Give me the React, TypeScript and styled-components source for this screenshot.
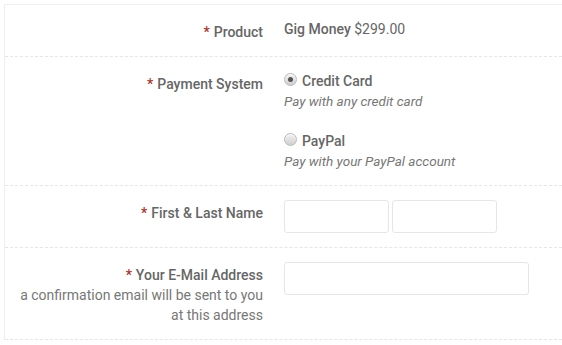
import React from "react";
import styled, { createGlobalStyle } from "styled-components";

const GlobalStyle = createGlobalStyle`
  html, body {
    margin: 0;
    padding: 0;
    background: #fff;
    overflow: hidden;
  }
  body {
    font-family: Roboto, "Liberation Sans", sans-serif;
    font-size: 14px;
    line-height: 20px;
    color: #666;
  }
`;

const Form = styled.div`
  margin: 4px 0 0 4px;
  border-top: 1px solid #f0f0f0;
  border-left: 1px solid #eeeeee;
`;

const Row = styled.div`
  display: flex;
  align-items: flex-start;
  padding: 14px 0;
  border-bottom: 1px dashed #e6e6e6;
`;

const Label = styled.div`
  flex: 0 0 258px;
  padding-top: 3px;
  text-align: right;
`;

const LabelTitle = styled.div`
  font-weight: 500;
  color: #666;
`;

const LabelHint = styled.div`
  color: #777;
`;

const Star = styled.span`
  color: #a8332e;
  margin-right: 4px;
`;

const Value = styled.div`
  margin-left: 21px;
  display: flex;
  flex-direction: column;
`;

const Product = styled.div`
  color: #666;
`;

const Strong = styled.span`
  font-weight: 500;
`;

const Option = styled.label<{ $gap?: boolean }>`
  display: flex;
  flex-direction: column;
  margin-top: ${(p) => (p.$gap ? "20px" : "0")};
`;

const OptionHead = styled.div`
  display: flex;
  align-items: center;
  font-weight: 500;
  color: #666;
`;

const Radio = styled.span<{ $checked?: boolean }>`
  position: relative;
  width: 11px;
  height: 11px;
  border-radius: 50%;
  margin: 0 5px 3px 0;
  border: 1px solid #b9b9b9;
  background: linear-gradient(#f2f2f2, #cfcfcf);
  box-shadow: inset 0 1px 1px rgba(255, 255, 255, 0.8);

  &::after {
    content: "";
    display: ${(p) => (p.$checked ? "block" : "none")};
    position: absolute;
    left: 3px;
    top: 3px;
    width: 5px;
    height: 5px;
    border-radius: 50%;
    background: #555;
  }
`;

const OptionDesc = styled.div`
  font-style: italic;
  color: #777;
  font-size: 13.5px;
`;

const Inputs = styled.div`
  display: flex;
  gap: 3px;
`;

const Input = styled.input<{ $w: number }>`
  box-sizing: border-box;
  width: ${(p) => p.$w}px;
  height: 33px;
  border: 1px solid #e6e6e6;
  border-radius: 3px;
  background: #fff;
  outline: none;
  margin: 0;
  padding: 0 8px;
  font-family: inherit;
`;

export default function App() {
  return (
    <>
      <GlobalStyle />
      <Form>
        <Row>
          <Label>
            <LabelTitle>
              <Star>*</Star>Product
            </LabelTitle>
          </Label>
          <Value>
            <Product>
              <Strong>Gig Money</Strong> $299.00
            </Product>
          </Value>
        </Row>
        <Row>
          <Label>
            <LabelTitle>
              <Star>*</Star>Payment System
            </LabelTitle>
          </Label>
          <Value>
            <Option>
              <OptionHead>
                <Radio $checked />
                Credit Card
              </OptionHead>
              <OptionDesc>Pay with any credit card</OptionDesc>
            </Option>
            <Option $gap>
              <OptionHead>
                <Radio />
                PayPal
              </OptionHead>
              <OptionDesc>Pay with your PayPal account</OptionDesc>
            </Option>
          </Value>
        </Row>
        <Row>
          <Label>
            <LabelTitle>
              <Star>*</Star>First &amp; Last Name
            </LabelTitle>
          </Label>
          <Value>
            <Inputs>
              <Input $w={105} />
              <Input $w={105} />
            </Inputs>
          </Value>
        </Row>
        <Row>
          <Label>
            <LabelTitle>
              <Star>*</Star>Your E-Mail Address
            </LabelTitle>
            <LabelHint>
              a confirmation email will be sent to you
              <br />
              at this address
            </LabelHint>
          </Label>
          <Value>
            <Input $w={245} />
          </Value>
        </Row>
      </Form>
    </>
  );
}
